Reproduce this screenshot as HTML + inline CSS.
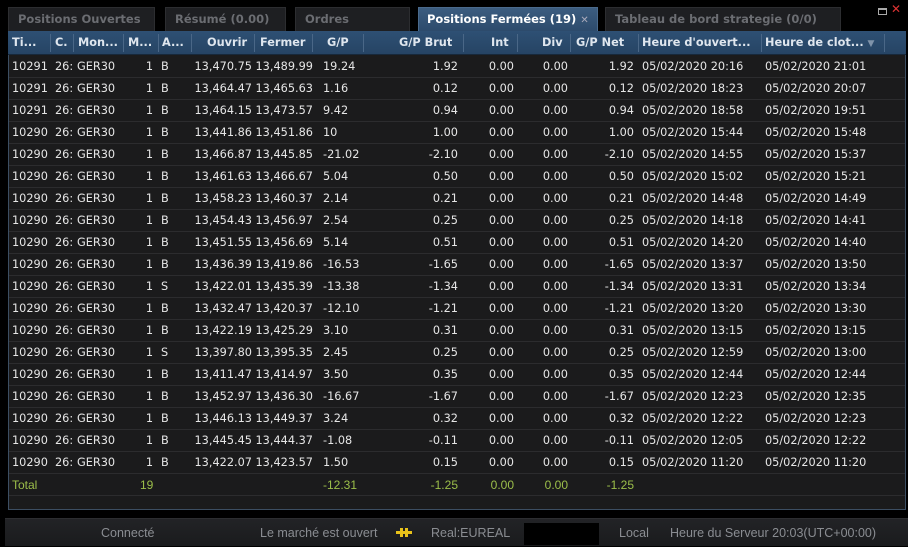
<!DOCTYPE html>
<html><head><meta charset="utf-8"><style>
*{margin:0;padding:0;box-sizing:border-box}
body{width:908px;height:546px;background:#000;overflow:hidden;position:relative;font-family:"DejaVu Sans","Liberation Sans",sans-serif;font-size:11.3px;color:#e6e6e6}
.tab{position:absolute;top:7px;height:24px;background:#1e1f22;border:1px solid #2c2d30;border-bottom:none;color:#6b6d72;font-weight:bold;font-size:11.5px;line-height:22px;padding-left:9px;white-space:nowrap;overflow:hidden}
.tab.act{background:linear-gradient(#3c5d80,#2c4a6b);color:#fff;border-color:#4a6a8c;top:7px;height:25px}
#tbl{position:absolute;left:8px;top:31px;width:898px;height:479px;background:#1b1b1c;border:1px solid #3c4e62;border-top:none}
#hdr{position:absolute;left:8px;top:31px;width:898px;height:24px;background:linear-gradient(#2e5074,#264464);border-bottom:1px solid #17283a}
.h{position:absolute;top:0;line-height:24px;font-weight:bold;color:#dfe6ee;font-size:11.3px;white-space:nowrap}
.sep{position:absolute;top:3px;width:1px;height:18px;background:#4a6787}
.r{position:absolute;left:9px;width:896px;height:22px;border-bottom:1px solid #2c2c2e}
.r span{position:absolute;top:0;line-height:22px;white-space:nowrap}
#status{position:absolute;left:5px;top:518px;width:903px;height:28px;background:linear-gradient(#222326,#1a1b1d);border-top:1px solid #2d2e31;color:#8a8d92;font-family:"Liberation Sans",sans-serif;font-size:12.5px}
#status span{position:absolute;top:0;line-height:28px}
.g{color:#9cbf4a}
.r:not(.g) span:nth-child(4){right:752px}
.r:not(.g) span:nth-child(5){left:152px}
</style></head><body>
<div class="tab" style="left:8px;width:147px">Positions Ouvertes</div>
<div class="tab" style="left:165px;width:121px">Résumé (0.00)</div>
<div class="tab" style="left:295px;width:115px">Ordres</div>
<div class="tab act" style="left:418px;width:180px;color:#fff;padding-left:8px">Positions Fermées (19) <span style="color:#aab;font-size:10px">✕</span></div>
<div class="tab" style="left:605px;width:236px">Tableau de bord strategie (0/0)</div>
<div style="position:absolute;left:878px;top:8px;width:9px;height:7px;border:1px solid #aaa;border-top-width:2px"></div>
<div style="position:absolute;left:891px;top:2px;color:#d33;font-weight:bold;font-size:12px">✕</div>

<div id="tbl"></div>
<div id="hdr">
<span class="h" style="left:4px">Ti...</span><div class="sep" style="left:42px"></div>
<span class="h" style="left:47px">C.</span><div class="sep" style="left:65px"></div>
<span class="h" style="left:70px">Mon...</span><div class="sep" style="left:115px"></div>
<span class="h" style="left:120px">M...</span><div class="sep" style="left:150px"></div>
<span class="h" style="left:154px">A...</span><div class="sep" style="left:183px"></div>
<span class="h" style="left:199px">Ouvrir</span><div class="sep" style="left:246px"></div>
<span class="h" style="left:252px">Fermer</span><div class="sep" style="left:304px"></div>
<span class="h" style="left:319px">G/P</span><div class="sep" style="left:355px"></div>
<span class="h" style="left:391px">G/P Brut</span><div class="sep" style="left:455px"></div>
<span class="h" style="left:483px">Int</span><div class="sep" style="left:509px"></div>
<span class="h" style="left:534px">Div</span><div class="sep" style="left:562px"></div>
<span class="h" style="left:568px">G/P Net</span><div class="sep" style="left:630px"></div>
<span class="h" style="left:634px">Heure d'ouvert...</span><div class="sep" style="left:753px"></div>
<span class="h" style="left:757px">Heure de clot... <span style="color:#7f93aa;font-size:9px">▼</span></span><div class="sep" style="left:876px"></div>
</div>

<div style="position:absolute;left:0;top:0">
<div class="r" style="top:56px"><span style="left:3px">10291</span><span style="left:46px">26:</span><span style="left:68px">GER30</span><span>1</span><span>B</span><span style="right:653px">13,470.75</span><span style="right:592px">13,489.99</span><span style="left:314px">19.24</span><span style="right:447px">1.92</span><span style="right:391px">0.00</span><span style="right:337px">0.00</span><span style="right:271px">1.92</span><span style="left:633px">05/02/2020 20:16</span><span style="left:756px">05/02/2020 21:01</span></div>
<div class="r" style="top:78px"><span style="left:3px">10291</span><span style="left:46px">26:</span><span style="left:68px">GER30</span><span>1</span><span>B</span><span style="right:653px">13,464.47</span><span style="right:592px">13,465.63</span><span style="left:314px">1.16</span><span style="right:447px">0.12</span><span style="right:391px">0.00</span><span style="right:337px">0.00</span><span style="right:271px">0.12</span><span style="left:633px">05/02/2020 18:23</span><span style="left:756px">05/02/2020 20:07</span></div>
<div class="r" style="top:100px"><span style="left:3px">10291</span><span style="left:46px">26:</span><span style="left:68px">GER30</span><span>1</span><span>B</span><span style="right:653px">13,464.15</span><span style="right:592px">13,473.57</span><span style="left:314px">9.42</span><span style="right:447px">0.94</span><span style="right:391px">0.00</span><span style="right:337px">0.00</span><span style="right:271px">0.94</span><span style="left:633px">05/02/2020 18:58</span><span style="left:756px">05/02/2020 19:51</span></div>
<div class="r" style="top:122px"><span style="left:3px">10290</span><span style="left:46px">26:</span><span style="left:68px">GER30</span><span>1</span><span>B</span><span style="right:653px">13,441.86</span><span style="right:592px">13,451.86</span><span style="left:314px">10</span><span style="right:447px">1.00</span><span style="right:391px">0.00</span><span style="right:337px">0.00</span><span style="right:271px">1.00</span><span style="left:633px">05/02/2020 15:44</span><span style="left:756px">05/02/2020 15:48</span></div>
<div class="r" style="top:144px"><span style="left:3px">10290</span><span style="left:46px">26:</span><span style="left:68px">GER30</span><span>1</span><span>B</span><span style="right:653px">13,466.87</span><span style="right:592px">13,445.85</span><span style="left:314px">-21.02</span><span style="right:447px">-2.10</span><span style="right:391px">0.00</span><span style="right:337px">0.00</span><span style="right:271px">-2.10</span><span style="left:633px">05/02/2020 14:55</span><span style="left:756px">05/02/2020 15:37</span></div>
<div class="r" style="top:166px"><span style="left:3px">10290</span><span style="left:46px">26:</span><span style="left:68px">GER30</span><span>1</span><span>B</span><span style="right:653px">13,461.63</span><span style="right:592px">13,466.67</span><span style="left:314px">5.04</span><span style="right:447px">0.50</span><span style="right:391px">0.00</span><span style="right:337px">0.00</span><span style="right:271px">0.50</span><span style="left:633px">05/02/2020 15:02</span><span style="left:756px">05/02/2020 15:21</span></div>
<div class="r" style="top:188px"><span style="left:3px">10290</span><span style="left:46px">26:</span><span style="left:68px">GER30</span><span>1</span><span>B</span><span style="right:653px">13,458.23</span><span style="right:592px">13,460.37</span><span style="left:314px">2.14</span><span style="right:447px">0.21</span><span style="right:391px">0.00</span><span style="right:337px">0.00</span><span style="right:271px">0.21</span><span style="left:633px">05/02/2020 14:48</span><span style="left:756px">05/02/2020 14:49</span></div>
<div class="r" style="top:210px"><span style="left:3px">10290</span><span style="left:46px">26:</span><span style="left:68px">GER30</span><span>1</span><span>B</span><span style="right:653px">13,454.43</span><span style="right:592px">13,456.97</span><span style="left:314px">2.54</span><span style="right:447px">0.25</span><span style="right:391px">0.00</span><span style="right:337px">0.00</span><span style="right:271px">0.25</span><span style="left:633px">05/02/2020 14:18</span><span style="left:756px">05/02/2020 14:41</span></div>
<div class="r" style="top:232px"><span style="left:3px">10290</span><span style="left:46px">26:</span><span style="left:68px">GER30</span><span>1</span><span>B</span><span style="right:653px">13,451.55</span><span style="right:592px">13,456.69</span><span style="left:314px">5.14</span><span style="right:447px">0.51</span><span style="right:391px">0.00</span><span style="right:337px">0.00</span><span style="right:271px">0.51</span><span style="left:633px">05/02/2020 14:20</span><span style="left:756px">05/02/2020 14:40</span></div>
<div class="r" style="top:254px"><span style="left:3px">10290</span><span style="left:46px">26:</span><span style="left:68px">GER30</span><span>1</span><span>B</span><span style="right:653px">13,436.39</span><span style="right:592px">13,419.86</span><span style="left:314px">-16.53</span><span style="right:447px">-1.65</span><span style="right:391px">0.00</span><span style="right:337px">0.00</span><span style="right:271px">-1.65</span><span style="left:633px">05/02/2020 13:37</span><span style="left:756px">05/02/2020 13:50</span></div>
<div class="r" style="top:276px"><span style="left:3px">10290</span><span style="left:46px">26:</span><span style="left:68px">GER30</span><span>1</span><span>S</span><span style="right:653px">13,422.01</span><span style="right:592px">13,435.39</span><span style="left:314px">-13.38</span><span style="right:447px">-1.34</span><span style="right:391px">0.00</span><span style="right:337px">0.00</span><span style="right:271px">-1.34</span><span style="left:633px">05/02/2020 13:31</span><span style="left:756px">05/02/2020 13:34</span></div>
<div class="r" style="top:298px"><span style="left:3px">10290</span><span style="left:46px">26:</span><span style="left:68px">GER30</span><span>1</span><span>B</span><span style="right:653px">13,432.47</span><span style="right:592px">13,420.37</span><span style="left:314px">-12.10</span><span style="right:447px">-1.21</span><span style="right:391px">0.00</span><span style="right:337px">0.00</span><span style="right:271px">-1.21</span><span style="left:633px">05/02/2020 13:20</span><span style="left:756px">05/02/2020 13:30</span></div>
<div class="r" style="top:320px"><span style="left:3px">10290</span><span style="left:46px">26:</span><span style="left:68px">GER30</span><span>1</span><span>B</span><span style="right:653px">13,422.19</span><span style="right:592px">13,425.29</span><span style="left:314px">3.10</span><span style="right:447px">0.31</span><span style="right:391px">0.00</span><span style="right:337px">0.00</span><span style="right:271px">0.31</span><span style="left:633px">05/02/2020 13:15</span><span style="left:756px">05/02/2020 13:15</span></div>
<div class="r" style="top:342px"><span style="left:3px">10290</span><span style="left:46px">26:</span><span style="left:68px">GER30</span><span>1</span><span>S</span><span style="right:653px">13,397.80</span><span style="right:592px">13,395.35</span><span style="left:314px">2.45</span><span style="right:447px">0.25</span><span style="right:391px">0.00</span><span style="right:337px">0.00</span><span style="right:271px">0.25</span><span style="left:633px">05/02/2020 12:59</span><span style="left:756px">05/02/2020 13:00</span></div>
<div class="r" style="top:364px"><span style="left:3px">10290</span><span style="left:46px">26:</span><span style="left:68px">GER30</span><span>1</span><span>B</span><span style="right:653px">13,411.47</span><span style="right:592px">13,414.97</span><span style="left:314px">3.50</span><span style="right:447px">0.35</span><span style="right:391px">0.00</span><span style="right:337px">0.00</span><span style="right:271px">0.35</span><span style="left:633px">05/02/2020 12:44</span><span style="left:756px">05/02/2020 12:44</span></div>
<div class="r" style="top:386px"><span style="left:3px">10290</span><span style="left:46px">26:</span><span style="left:68px">GER30</span><span>1</span><span>B</span><span style="right:653px">13,452.97</span><span style="right:592px">13,436.30</span><span style="left:314px">-16.67</span><span style="right:447px">-1.67</span><span style="right:391px">0.00</span><span style="right:337px">0.00</span><span style="right:271px">-1.67</span><span style="left:633px">05/02/2020 12:23</span><span style="left:756px">05/02/2020 12:35</span></div>
<div class="r" style="top:408px"><span style="left:3px">10290</span><span style="left:46px">26:</span><span style="left:68px">GER30</span><span>1</span><span>B</span><span style="right:653px">13,446.13</span><span style="right:592px">13,449.37</span><span style="left:314px">3.24</span><span style="right:447px">0.32</span><span style="right:391px">0.00</span><span style="right:337px">0.00</span><span style="right:271px">0.32</span><span style="left:633px">05/02/2020 12:22</span><span style="left:756px">05/02/2020 12:23</span></div>
<div class="r" style="top:430px"><span style="left:3px">10290</span><span style="left:46px">26:</span><span style="left:68px">GER30</span><span>1</span><span>B</span><span style="right:653px">13,445.45</span><span style="right:592px">13,444.37</span><span style="left:314px">-1.08</span><span style="right:447px">-0.11</span><span style="right:391px">0.00</span><span style="right:337px">0.00</span><span style="right:271px">-0.11</span><span style="left:633px">05/02/2020 12:05</span><span style="left:756px">05/02/2020 12:22</span></div>
<div class="r" style="top:452px"><span style="left:3px">10290</span><span style="left:46px">26:</span><span style="left:68px">GER30</span><span>1</span><span>B</span><span style="right:653px">13,422.07</span><span style="right:592px">13,423.57</span><span style="left:314px">1.50</span><span style="right:447px">0.15</span><span style="right:391px">0.00</span><span style="right:337px">0.00</span><span style="right:271px">0.15</span><span style="left:633px">05/02/2020 11:20</span><span style="left:756px">05/02/2020 11:20</span></div>
<div class="r g" style="top:474px;font-family:'Liberation Sans',sans-serif;font-size:12px"><span style="left:3px">Total</span><span style="left:131px">19</span><span style="left:314px">-12.31</span><span style="right:447px">-1.25</span><span style="right:391px">0.00</span><span style="right:337px">0.00</span><span style="right:271px">-1.25</span></div>
</div>

<div id="status">
<span style="left:96px">Connecté</span>
<span style="left:255px">Le marché est ouvert</span>
<span style="left:391px;top:9px;width:16px;height:9px;line-height:0">
<svg width="16" height="9"><rect x="0" y="3" width="16" height="3" fill="#e8c21a"/><rect x="4" y="0" width="3" height="9" fill="#e8c21a"/><rect x="9" y="0" width="3" height="9" fill="#e8c21a"/></svg></span>
<span style="left:426px">Real:EUREAL</span>
<span style="left:519px;top:4px;width:75px;height:22px;background:#000"></span>
<span style="left:614px">Local</span>
<span style="left:665px">Heure du Serveur 20:03(UTC+00:00)</span>
</div>
</body></html>
